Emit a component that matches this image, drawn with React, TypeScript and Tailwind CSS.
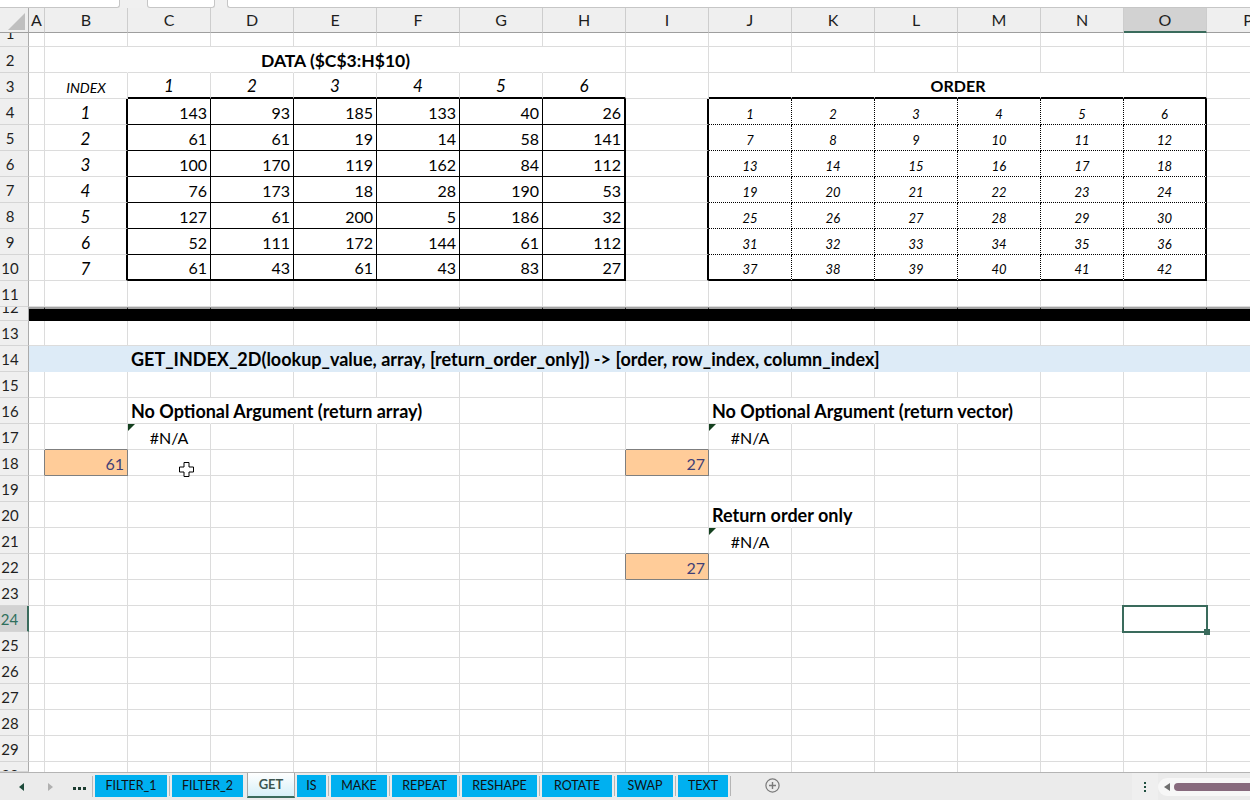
import React from 'react';

const COLS = ['A', 'B', 'C', 'D', 'E', 'F', 'G', 'H', 'I', 'J', 'K', 'L', 'M', 'N', 'O', 'P'];
const DATA = [
  [143, 93, 185, 133, 40, 26],
  [61, 61, 19, 14, 58, 141],
  [100, 170, 119, 162, 84, 112],
  [76, 173, 18, 28, 190, 53],
  [127, 61, 200, 5, 186, 32],
  [52, 111, 172, 144, 61, 112],
  [61, 43, 61, 43, 83, 27],
];
const ROWS = Array.from({ length: 30 }, (_, i) => i + 1);

const isInput = (r: number, c: number) =>
  (r === 18 && c === 1) || (r === 18 && c === 8) || (r === 22 && c === 8);

function rowHeight(r: number): string {
  if (r === 1) return 'h-[14px]';
  if (r === 12) return 'h-[14px]';
  if (r === 13) return 'h-[25px]';
  if (r === 30) return 'h-[10px]';
  return 'h-[26px]';
}

function rightBorder(r: number, c: number): string {
  if (r === 12) return 'border-r border-r-black';
  if (r === 14) return 'border-r border-r-[#ddebf7]';
  if (r >= 4 && r <= 10) {
    if (c === 1 || c === 7 || c === 8 || c === 14) return 'border-r-2 border-r-black';
    if (c >= 2 && c <= 6) return 'border-r border-r-black';
    if (c >= 9 && c <= 13) return 'border-r border-r-black [border-right-style:dotted]';
  }
  if (r === 2 && c >= 1 && c <= 6) return 'border-r border-r-white';
  if (r === 3 && c >= 9 && c <= 13) return 'border-r border-r-white';
  if (r === 16 && ((c >= 2 && c <= 4) || (c >= 9 && c <= 11))) return 'border-r border-r-white';
  if (r === 20 && c === 9) return 'border-r border-r-white';
  if (isInput(r, c) || isInput(r, c + 1)) return 'border-r border-r-[#7f7f7f]';
  return 'border-r border-r-[#dcdcdc]';
}

function bottomBorder(r: number, c: number): string {
  if (r === 30) return '';
  if (r === 12) return 'border-t-2 border-t-[#a3a3a3] border-b border-b-black';
  if (r === 14) return 'border-b border-b-[#ddebf7]';
  const dc = c >= 2 && c <= 7;
  const oc = c >= 9 && c <= 14;
  if (r === 3 && (dc || oc)) return 'border-b-2 border-b-black';
  if (r >= 4 && r <= 9) {
    if (dc) return 'border-b border-b-black';
    if (oc) return 'border-b border-b-black [border-bottom-style:dotted]';
  }
  if (r === 10 && (dc || oc)) return 'border-b-2 border-b-black';
  if (isInput(r, c) || isInput(r + 1, c)) return 'border-b border-b-[#7f7f7f]';
  return 'border-b border-b-[#dcdcdc]';
}

function cellBg(r: number, c: number): string {
  if (r === 12) return 'bg-black';
  if (r === 14) return 'bg-[#ddebf7]';
  if (isInput(r, c)) return 'bg-[#ffcc99]';
  return '';
}

function ErrTri() {
  return (
    <div className="absolute left-0 top-0 w-0 h-0 border-t-[7px] border-t-[#14401f] border-r-[7px] border-r-transparent" />
  );
}

function NA() {
  return (
    <>
      <ErrTri />
      <span className="w-full text-center text-[16px] text-black">#N/A</span>
    </>
  );
}

function Bold({ children }: { children: React.ReactNode }) {
  return (
    <span className="relative z-10 shrink-0 whitespace-nowrap pl-[3px] font-bold text-[18px] text-black">
      {children}
    </span>
  );
}

function Input({ v }: { v: number }) {
  return <span className="w-full text-right pr-[3px] text-[16px] text-[#3f3f76]">{v}</span>;
}

function content(r: number, c: number): React.ReactNode {
  if (r === 2 && c === 1)
    return (
      <span className="relative z-10 w-[581px] shrink-0 text-center font-bold text-[17.5px] text-black">
        DATA ($C$3:H$10)
      </span>
    );
  if (r === 3 && c === 9)
    return (
      <span className="relative z-10 w-[498px] shrink-0 text-center font-bold text-[16px] text-black">
        ORDER
      </span>
    );
  if (r === 3 && c === 1)
    return <span className="w-full text-center italic text-[14px] text-black">INDEX</span>;
  if (r === 3 && c >= 2 && c <= 7)
    return <span className="w-full text-center italic text-[17px] text-black">{c - 1}</span>;
  if (r >= 4 && r <= 10) {
    if (c === 1) return <span className="w-full text-center italic text-[17px] text-black">{r - 3}</span>;
    if (c >= 2 && c <= 7)
      return <span className="w-full text-right pr-[3px] text-[16px] text-black">{DATA[r - 4][c - 2]}</span>;
    if (c >= 9 && c <= 14)
      return (
        <span className="w-full text-center italic text-[13px] text-black">{(r - 4) * 6 + (c - 9) + 1}</span>
      );
  }
  if (r === 14 && c === 2)
    return <Bold>GET_INDEX_2D(lookup_value, array, [return_order_only]) -&gt; [order, row_index, column_index]</Bold>;
  if (r === 16 && c === 2) return <Bold>No Optional Argument (return array)</Bold>;
  if (r === 16 && c === 9) return <Bold>No Optional Argument (return vector)</Bold>;
  if (r === 20 && c === 9) return <Bold>Return order only</Bold>;
  if ((r === 17 && (c === 2 || c === 9)) || (r === 21 && c === 9)) return <NA />;
  if (r === 18 && c === 1) return <Input v={61} />;
  if (r === 18 && c === 8) return <Input v={27} />;
  if (r === 22 && c === 8) return <Input v={27} />;
  if (r === 18 && c === 2)
    return (
      <svg className="absolute left-[51px] top-[12px] z-20" width="15" height="15" viewBox="0 0 15 15">
        <path d="M5 .5H10V5H14.5V10H10V14.5H5V10H.5V5H5Z" fill="white" stroke="black" strokeWidth="1" />
      </svg>
    );
  if (r === 24 && c === 14)
    return (
      <div className="absolute -left-[2px] -top-[1px] w-[86px] h-[28px] border-2 border-[#3a6b5c] z-20">
        <div className="absolute -right-[4px] -bottom-[4px] w-[6px] h-[6px] bg-[#3a6b5c]" />
      </div>
    );
  return null;
}

function Cell({ r, c }: { r: number; c: number }) {
  const cls = [
    'relative shrink-0 flex items-end pb-[3px] leading-none',
    c === 0 ? 'w-[16px]' : 'w-[83px]',
    rightBorder(r, c),
    bottomBorder(r, c),
    cellBg(r, c),
  ].join(' ');
  return <div className={cls}>{content(r, c)}</div>;
}

function RowHeader({ r }: { r: number }) {
  const sel = r === 24;
  const align = r === 1 || r === 12 ? 'items-end' : r === 30 ? 'items-start' : 'items-center';
  return (
    <div
      className={`w-[29px] shrink-0 flex justify-center pr-[8px] overflow-hidden border-b border-b-[#d5d5d5] ${align} ${
        sel
          ? 'bg-[#d2d2d2] text-[#2f6f5c] border-r-2 border-r-[#3a6b5c]'
          : 'bg-[#efefef] text-[#1f1f1f] border-r border-r-[#ababab]'
      }`}
    >
      <span className="h-[26px] leading-[26px] text-[15px] shrink-0">{r}</span>
    </div>
  );
}

function Sep() {
  return <div className="w-px h-[20px] mt-[3px] mx-[2px] bg-[#b5b5b5] shrink-0" />;
}

function Tab({ name, w }: { name: string; w: string }) {
  return (
    <div
      className={`mt-[2px] h-[22px] bg-[#00b0f0] flex items-center justify-center text-[12.5px] text-[#111] shrink-0 ${w}`}
    >
      {name}
    </div>
  );
}

export default function App() {
  return (
    <div className="w-[1250px] h-[800px] overflow-hidden bg-white flex flex-col font-['Lato',sans-serif]">
      {/* formula bar remnant */}
      <div className="flex h-[8px] shrink-0 bg-[#f0f0f0]">
        <div className="w-[120px] shrink-0 bg-white border-b border-r border-[#c6c6c6] rounded-br-[3px]" />
        <div className="w-[27px] shrink-0" />
        <div className="w-[68px] shrink-0 bg-white border-b border-x border-[#c6c6c6] rounded-b-[3px]" />
        <div className="w-[12px] shrink-0" />
        <div className="flex-1 bg-white border-b border-l border-[#c6c6c6] rounded-bl-[3px]" />
      </div>

      {/* column headers */}
      <div className="flex h-[25px] shrink-0">
        <div className="relative w-[29px] shrink-0 bg-[#efefef] border-r border-r-[#ababab] border-b border-b-[#9e9e9e]">
          <div className="absolute right-[3px] bottom-[2px] w-0 h-0 border-l-[17px] border-l-transparent border-b-[17px] border-b-[#bfbfbf]" />
        </div>
        {COLS.map((col, i) => (
          <div
            key={col}
            className={`shrink-0 flex items-center justify-center text-[16px] text-[#1e1e1e] border-r border-r-[#cdcdcd] ${
              i === 0 ? 'w-[16px]' : 'w-[83px]'
            } ${
              col === 'O'
                ? 'bg-[#d2d2d2] border-b-2 border-b-[#3a6b5c]'
                : 'bg-[#efefef] border-b border-b-[#9e9e9e]'
            }`}
          >
            {col}
          </div>
        ))}
      </div>

      {/* grid rows */}
      {ROWS.map((r) => (
        <div key={r} className={`flex shrink-0 ${rowHeight(r)}`}>
          <RowHeader r={r} />
          {COLS.map((_, c) => (
            <Cell key={c} r={r} c={c} />
          ))}
        </div>
      ))}

      {/* sheet tabs */}
      <div className="flex h-[28px] shrink-0 bg-[#ebebeb] border-t border-t-[#b4b4b4]">
        <div className="w-[92px] shrink-0 flex items-center pl-[19px]">
          <svg width="5" height="8" viewBox="0 0 5 8">
            <path d="M5 0V8L0 4Z" fill="#1c4a3a" />
          </svg>
          <svg className="ml-[24px]" width="5" height="8" viewBox="0 0 5 8">
            <path d="M0 0V8L5 4Z" fill="#b0b0b0" />
          </svg>
          <div className="ml-[20px] mt-[4px] flex gap-[2.5px]">
            <div className="w-[2.5px] h-[2.5px] bg-[#1c3c30]" />
            <div className="w-[2.5px] h-[2.5px] bg-[#1c3c30]" />
            <div className="w-[2.5px] h-[2.5px] bg-[#1c3c30]" />
          </div>
        </div>
        <div className="w-px h-[21px] mt-[3px] bg-[#b9b9b9] shrink-0" />
        <div className="flex items-start ml-[2px]">
          <Tab name="FILTER_1" w="w-[72px]" />
          <Sep />
          <Tab name="FILTER_2" w="w-[71px]" />
          <div className="w-[4px] shrink-0" />
          <div className="h-[25px] w-[48px] shrink-0 bg-linear-to-b from-white to-[#d6f0f8] border-x border-x-[#a6a6a6] border-b-2 border-b-[#3a6b5c] flex items-center justify-center font-bold text-[13px] text-[#3d5550]">
            GET
          </div>
          <div className="w-[2px] shrink-0" />
          <Tab name="IS" w="w-[29px]" />
          <Sep />
          <Tab name="MAKE" w="w-[56px]" />
          <Sep />
          <Tab name="REPEAT" w="w-[65px]" />
          <Sep />
          <Tab name="RESHAPE" w="w-[75px]" />
          <Sep />
          <Tab name="ROTATE" w="w-[70px]" />
          <Sep />
          <Tab name="SWAP" w="w-[56px]" />
          <Sep />
          <Tab name="TEXT" w="w-[50px]" />
          <div className="w-[2px] shrink-0" />
          <div className="w-px h-[20px] mt-[3px] bg-[#b5b5b5] shrink-0" />
          <svg className="ml-[34px] mt-[5px] shrink-0" width="15" height="15" viewBox="0 0 15 15">
            <circle cx="7.5" cy="7.5" r="6.6" fill="none" stroke="#7a7a7a" strokeWidth="1.2" />
            <path d="M7.5 4V11M4 7.5H11" stroke="#7a7a7a" strokeWidth="1.4" />
          </svg>
        </div>
        <div className="ml-auto flex items-center">
          <div className="w-[26px] h-full bg-[#efefef] flex flex-col items-center justify-center gap-[2px]">
            <div className="w-[2px] h-[2px] bg-[#1f4f3f]" />
            <div className="w-[2px] h-[2px] bg-[#1f4f3f]" />
            <div className="w-[2px] h-[2px] bg-[#1f4f3f]" />
          </div>
          <div className="w-[92px] h-[18px] rounded-l-[9px] bg-[#f7f7f7] flex items-center pl-[6px]">
            <svg width="6" height="8" viewBox="0 0 6 8">
              <path d="M6 0V8L0 4Z" fill="#6f6f6f" />
            </svg>
            <div className="ml-[4px] flex-1 h-[8px] rounded-l-full bg-[#876a7d]" />
          </div>
        </div>
      </div>
    </div>
  );
}
